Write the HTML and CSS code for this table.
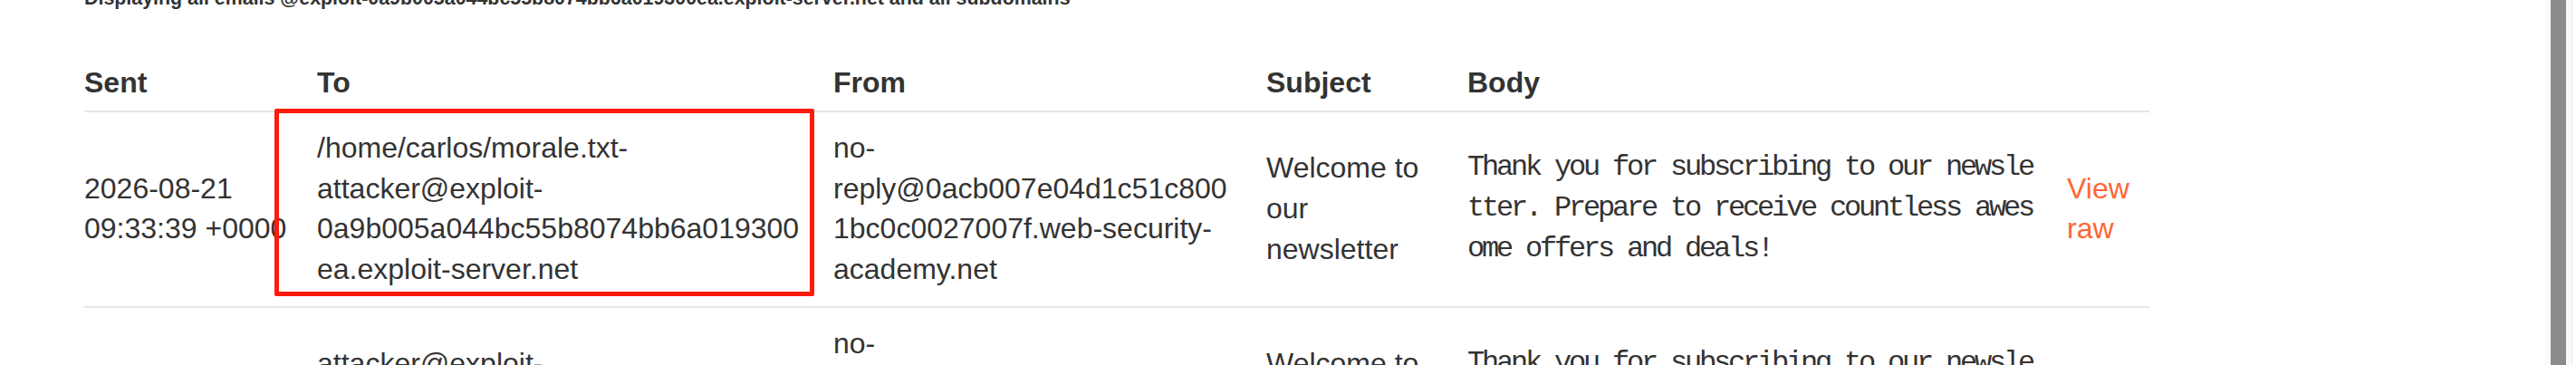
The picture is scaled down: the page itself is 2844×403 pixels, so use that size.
FILE: index.html
```html
<!DOCTYPE html>
<html lang="en">
<head>
  <meta charset="UTF-8">
  <meta name="viewport" content="width=device-width, initial-scale=1.0">
  <title>Email client</title>
  <link rel="stylesheet" href="styles.css">
</head>
<body>
  <div class="window">
    <main class="page">
      <h4 class="summary">Displaying all emails @exploit-0a9b005a044bc55b8074bb6a019300ea.exploit-server.net and all subdomains</h4>
      <table class="emails">
        <colgroup>
          <col class="col-sent">
          <col class="col-to">
          <col class="col-from">
          <col class="col-subject">
          <col class="col-body">
          <col class="col-raw">
        </colgroup>
        <thead>
          <tr>
            <th>Sent</th>
            <th>To</th>
            <th>From</th>
            <th>Subject</th>
            <th>Body</th>
            <th></th>
          </tr>
        </thead>
        <tbody>
          <tr>
            <td>2026-08-21 09:33:39 +0000</td>
            <td class="highlight">/home/carlos/morale.txt-attacker@exploit-<wbr>0a9b005a044bc55b8074bb6a019300ea.exploit-server.net</td>
            <td>no-reply@0acb007e04d1c51c8001bc0c0027007f.web-security-academy.net</td>
            <td>Welcome to our newsletter</td>
            <td><pre class="body-text">Thank you for subscribing to our newsletter. Prepare to receive countless awesome offers and deals!</pre></td>
            <td><a href="#" class="view-raw">View raw</a></td>
          </tr>
          <tr>
            <td>2026-08-21 09:31:12 +0000</td>
            <td>attacker@exploit-<wbr>0a9b005a044bc55b8074bb6a019300ea.exploit-server.net</td>
            <td>no-reply@0acb007e04d1c51c8001bc0c0027007f.web-security-academy.net</td>
            <td>Welcome to our newsletter</td>
            <td><pre class="body-text">Thank you for subscribing to our newsletter. Prepare to receive countless awesome offers and deals!</pre></td>
            <td><a href="#" class="view-raw">View raw</a></td>
          </tr>
        </tbody>
      </table>
    </main>
    <div class="scrollbar" aria-hidden="true">
      <div class="scrollbar-thumb"></div>
    </div>
  </div>
</body>
</html>
```

FILE: styles.css
```css
/* Reset */
*, *::before, *::after {
  box-sizing: border-box;
}

/* Custom Properties */
:root {
  --text-primary: #333333;
  --rule: #e6e6e6;
  --accent: #ff6633;
  --marker: #ff1a0d;
  --font-sans: 'Liberation Sans', Arial, sans-serif;
  --font-mono: 'Liberation Mono', 'Courier New', monospace;
  --line: 44.8px;
}

html, body {
  margin: 0;
  height: 100%;
}

body {
  font-family: var(--font-sans);
  font-size: 32px;
  line-height: var(--line);
  color: var(--text-primary);
  background: #ffffff;
  overflow: hidden;
}

/* Window: page + scrollbar */
.window {
  display: flex;
  height: 100vh;
}

.page {
  flex: 1;
  min-width: 0;
  padding-left: 93px;
  overflow: hidden;
}

.summary {
  margin: -15px 0 58px;
  font-size: 21.4px;
  line-height: 26px;
  font-weight: 700;
  white-space: nowrap;
}

/* Email table */
.emails {
  width: 2280px;
  table-layout: fixed;
  border-collapse: separate;
  border-spacing: 0;
}

.col-sent { width: 257px; }
.col-to { width: 570px; }
.col-from { width: 478px; }
.col-subject { width: 222px; }
.col-body { width: 662px; }
.col-raw { width: 91px; }

.emails th,
.emails td {
  text-align: left;
  vertical-align: middle;
  border-bottom: 2px solid var(--rule);
  overflow-wrap: break-word;
}

.emails th {
  font-weight: 700;
  padding: 0 30px 8px 0;
}

.emails td {
  padding: 17px 30px 18px 0;
}

.emails th:last-child,
.emails td:last-child {
  padding-right: 0;
}

.body-text {
  margin: 0;
  font-family: var(--font-mono);
  font-size: 32px;
  line-height: var(--line);
  letter-spacing: -3.2px;
  white-space: pre-wrap;
  word-break: break-all;
}

.view-raw {
  color: var(--accent);
  text-decoration: none;
}

/* Red annotation box over the To cell */
.highlight {
  position: relative;
}

.highlight::after {
  content: '';
  position: absolute;
  left: -47px;
  top: -4px;
  width: 596px;
  height: 207px;
  border: 5px solid var(--marker);
  border-radius: 2px;
  pointer-events: none;
}

/* Scrollbar strip */
.scrollbar {
  width: 30px;
  margin-right: 4px;
  padding: 0 6px;
  background: #fafafa;
  border-right: 1px solid #e8e8e8;
}

.scrollbar-thumb {
  height: 100%;
  background: #8b8b8b;
}
```
